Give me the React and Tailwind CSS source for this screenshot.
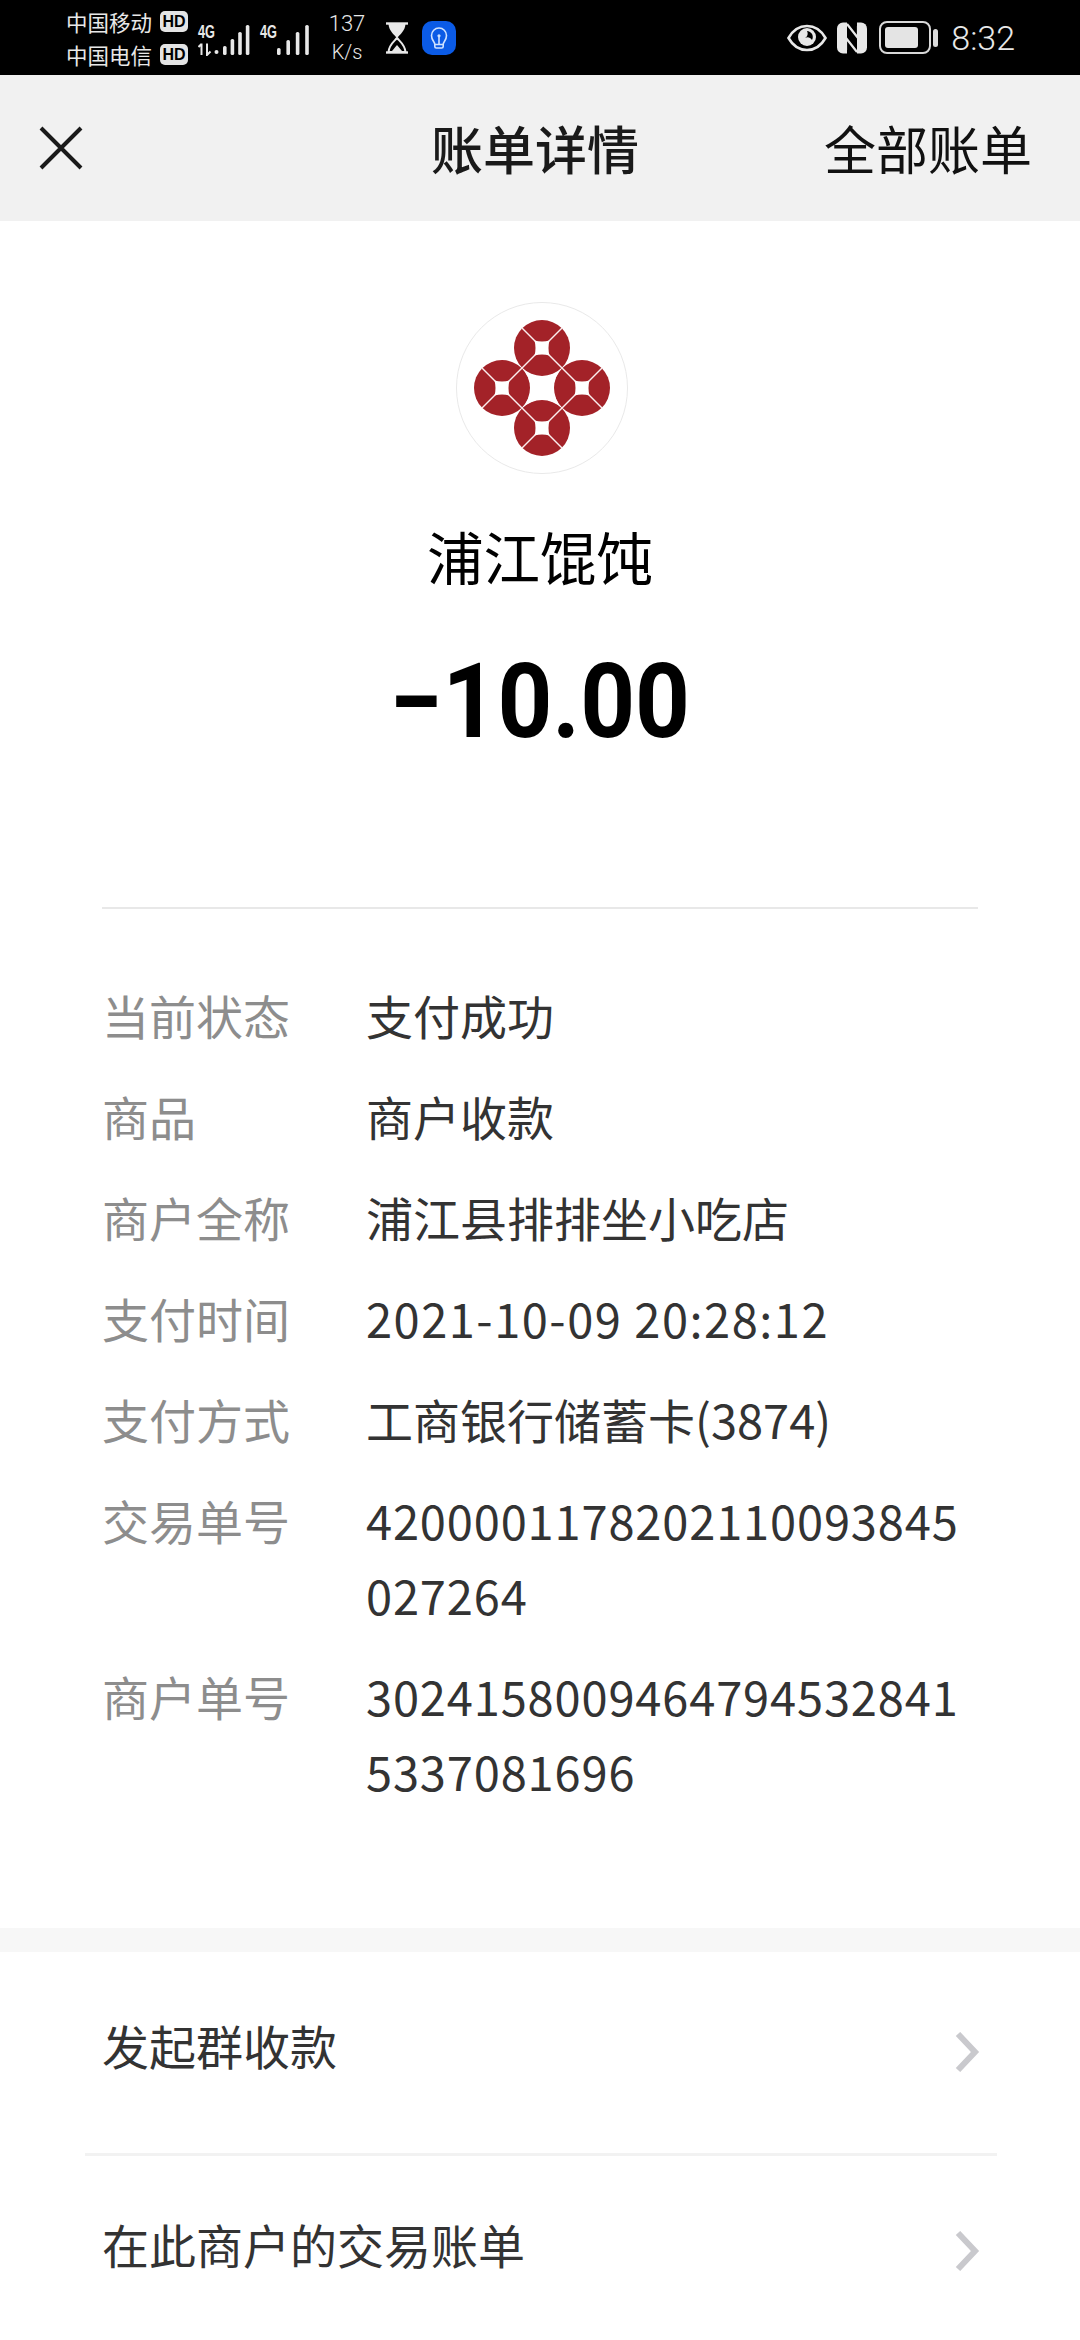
import React from "react";

const FONT = "font-['Noto_Sans_CJK_SC','Noto_Sans',sans-serif]";

function Signal({ heights, x0, pitch }) {
  return (
    <svg width="52" height="34" viewBox="0 0 52 34" className="block overflow-visible">
      <text x="0" y="15" fontSize="19" fontWeight="700" fill="#e8e8e8" fontFamily="Liberation Sans" textLength="17" lengthAdjust="spacingAndGlyphs">4G</text>
      {heights.map((h, i) => (
        <rect key={i} x={i * pitch + x0} y={32 - h} width="3.6" height={h} rx="1.6" fill="#e8e8e8" />
      ))}
    </svg>
  );
}

function Logo() {
  const coins = [[86, 46], [46, 86], [126, 86], [86, 126]];
  return (
    <svg width="172" height="172" viewBox="0 0 172 172" className="block ml-[3px]">
      <circle cx="86" cy="86" r="85.5" fill="#fff" stroke="#e9e9e9" strokeWidth="1" />
      {coins.map(([x, y]) => (
        <circle key={`${x}${y}`} cx={x} cy={y} r="28" fill="#a32228" />
      ))}
      {coins.map(([x, y]) => (
        <g key={`l${x}${y}`} stroke="#fbeeee" strokeWidth="1.4">
          <line x1={x - 20} y1={y - 20} x2={x + 20} y2={y + 20} />
          <line x1={x - 20} y1={y + 20} x2={x + 20} y2={y - 20} />
          <path
            d={`M${x - 7.5} ${y - 7.5}Q${x} ${y - 5.5} ${x + 7.5} ${y - 7.5}Q${x + 5.5} ${y} ${x + 7.5} ${y + 7.5}Q${x} ${y + 5.5} ${x - 7.5} ${y + 7.5}Q${x - 5.5} ${y} ${x - 7.5} ${y - 7.5}Z`}
            fill="#fff"
            stroke="none"
          />
        </g>
      ))}
      <path
        d="M66 66A28 28 0 0 0 106 66A28 28 0 0 0 106 106A28 28 0 0 0 66 106A28 28 0 0 0 66 66Z"
        fill="#fff"
      />
    </svg>
  );
}

function StatusBar() {
  return (
    <div className={`h-[75px] bg-black flex items-center text-[#e8e8e8] shrink-0 ${FONT}`}>
      <div className="ml-[66px] w-[122px] flex flex-col gap-[12px]">
        {["中国移动", "中国电信"].map((t) => (
          <div key={t} className="flex items-center h-[21px]">
            <span className="text-[21.5px] leading-[21px] w-[94px] whitespace-nowrap">{t}</span>
            <span className="w-[28px] h-[21px] rounded-[5px] bg-[#e4e4e4] text-black text-[16px] leading-[21px] font-bold text-center font-['Liberation_Sans',sans-serif]">HD</span>
          </div>
        ))}
      </div>
      <div className="ml-[10px] mt-[4px] relative">
        <Signal heights={[9, 16, 23, 30]} x0={25} pitch={7.6} />
        <svg width="24" height="13" viewBox="0 0 24 13" className="absolute left-0 top-[20px]">
          <path d="M3.5 0.5V12M0.5 4L3.5 1" stroke="#e8e8e8" strokeWidth="2" fill="none" />
          <path d="M9 0.5V12L12.5 8.5" stroke="#e8e8e8" strokeWidth="2" fill="none" />
          <circle cx="18.5" cy="9" r="2" fill="#e8e8e8" />
        </svg>
      </div>
      <div className="ml-[10px] mt-[4px]">
        <Signal heights={[7, 15, 23, 30]} x0={17} pitch={9.4} />
      </div>
      <div className="ml-[15px] w-[40px] flex flex-col items-center text-[22px] leading-[28px] font-['Roboto',sans-serif] font-light">
        <span>137</span>
        <span className="text-[20px]">K/s</span>
      </div>
      <svg width="24" height="32" viewBox="0 0 24 32" className="ml-[18px] block">
        <path d="M1 1.5H23" stroke="#e8e8e8" strokeWidth="2.4" />
        <path d="M1 30.5H23" stroke="#e8e8e8" strokeWidth="2.4" />
        <path d="M3.5 2H20.5C20 9 15 12.5 12 16C9 12.5 4 9 3.5 2Z" fill="#e8e8e8" />
        <path d="M12 16C15 19.5 20 23 20.5 30H3.5C4 23 9 19.5 12 16Z" fill="none" stroke="#e8e8e8" strokeWidth="2" />
        <path d="M12 23L17 29H7Z" fill="#e8e8e8" />
      </svg>
      <svg width="34" height="34" viewBox="0 0 34 34" className="ml-[13px] block">
        <rect width="34" height="34" rx="10" fill="#0b5be6" />
        <path d="M12.8 23.5C12.8 20.5 9.5 19.5 9.5 14.5A7.5 7.5 0 0 1 24.5 14.5C24.5 19.5 21.2 20.5 21.2 23.5V25.5A1.5 1.5 0 0 1 19.7 27H14.3A1.5 1.5 0 0 1 12.8 25.5Z" fill="none" stroke="#cfe2ff" strokeWidth="1.6" />
        <path d="M17 16V23.5M13 23.5H21" stroke="#cfe2ff" strokeWidth="1.6" fill="none" />
        <circle cx="17" cy="14.8" r="1.6" fill="#cfe2ff" />
      </svg>

      <svg width="40" height="28" viewBox="0 0 40 28" className="ml-auto block">
        <path d="M1.5 14C6 6 12.5 2 20 2S34 6 38.5 14C34 22 27.5 26 20 26S6 22 1.5 14Z" fill="none" stroke="#e8e8e8" strokeWidth="2.6" />
        <circle cx="20" cy="13" r="9" fill="#e8e8e8" />
        <path d="M20 7a6 6 0 0 1 5 9a5 5 0 0 0-7-2a5 5 0 0 0 2-7Z" fill="#000" />
      </svg>
      <svg width="30" height="32" viewBox="0 0 30 32" className="ml-[10px] block">
        <path d="M6 0.5H10V31.5H6A6 6 0 0 1 0 25.5V6.5A6 6 0 0 1 6 0.5Z" fill="#e8e8e8" />
        <path d="M20 0.5H24A6 6 0 0 1 30 6.5V25.5A6 6 0 0 1 24 31.5H20Z" fill="#e8e8e8" />
        <path d="M10 2L21 16V4M20 30L9 16V28" stroke="#e8e8e8" strokeWidth="2.2" fill="none" />
      </svg>
      <div className="ml-[12px] w-[52px] h-[33px] rounded-[8px] border-[2px] border-[#d8d8d8] p-[4px]">
        <div className="w-[33px] h-full rounded-[3px] bg-[#e4e4e4]" />
      </div>
      <div className="ml-[2px] w-[5px] h-[18px] rounded-full bg-[#dcdcdc]" />
      <span className="ml-[13px] mr-[65px] text-[34px] leading-none font-['Roboto',sans-serif] font-light">8:32</span>
    </div>
  );
}

function NavBar() {
  return (
    <div className={`h-[146px] bg-[#f1f1f1] flex items-center shrink-0 pl-[39px] pr-[48px] ${FONT}`}>
      <svg width="44" height="44" viewBox="0 0 44 44" className="block">
        <path d="M2 2L42 42M42 2L2 42" stroke="#1a1a1a" strokeWidth="4" fill="none" />
      </svg>
      <span className="ml-[348px] text-[52px] leading-none text-[#1a1a1a] font-medium whitespace-nowrap">账单详情</span>
      <span className="ml-auto text-[52px] leading-none text-[#111] whitespace-nowrap">全部账单</span>
    </div>
  );
}

function Row({ label, lines, lineClass = "" }) {
  return (
    <div className="flex mb-[26px]">
      <div className="w-[264px] text-[#8d8d8d] shrink-0">{label}</div>
      <div className="text-[#333]">
        {lines.map((l) => (
          <div key={l} className={`whitespace-nowrap ${lineClass}`}>{l}</div>
        ))}
      </div>
    </div>
  );
}

function Chevron() {
  return (
    <svg width="26" height="40" viewBox="0 0 26 40" className="block mt-[15px]">
      <path d="M3 2L20 20L3 38" stroke="#c9c9cd" strokeWidth="6" fill="none" />
    </svg>
  );
}

function LinkRow({ label, className }) {
  return (
    <div className={`flex items-center justify-between pl-[17px] pr-[16px] ${className}`}>
      <span className="text-[47px] leading-none text-[#333] whitespace-nowrap">{label}</span>
      <Chevron />
    </div>
  );
}

export default function App() {
  return (
    <div className={`w-[1080px] h-[2340px] bg-white flex flex-col overflow-hidden ${FONT}`}>
      <StatusBar />
      <NavBar />
      <div className="flex flex-col items-center pt-[81px]">
        <Logo />
        <div className="mt-[39px] text-[56.5px] leading-[84px] text-black whitespace-nowrap">浦江馄饨</div>
        <div className="mt-[45px] text-[103px] leading-[120px] font-bold text-black whitespace-nowrap font-['Roboto','Noto_Sans',sans-serif] scale-x-[0.93]">−10.00</div>
      </div>
      <div className="mx-[102px] mt-[145px] h-[2px] bg-[#e8e8e8] shrink-0" />
      <div className="px-[102px] pt-[68px] text-[47px] leading-[75px]">
        <Row label="当前状态" lines={["支付成功"]} />
        <Row label="商品" lines={["商户收款"]} />
        <Row label="商户全称" lines={["浦江县排排坐小吃店"]} />
        <Row label="支付时间" lines={["2021-10-09 20:28:12"]} lineClass="tracking-[1.5px]" />
        <Row label="支付方式" lines={["工商银行储蓄卡(3874)"]} />
        <Row label="交易单号" lines={["420000117820211009384" + "5", "027264"]} lineClass="tracking-[0.85px]" />
        <Row label="商户单号" lines={["302415800946479453284" + "1", "5337081696"]} lineClass="tracking-[0.85px]" />
      </div>
      <div className="mt-auto flex flex-col">
        <div className="h-[24px] bg-[#f7f7f7]" />
        <div className="ml-[85px] mr-[83px]">
          <LinkRow label="发起群收款" className="h-[204px] pb-[16px] border-b-[3px] border-[#f2f2f2]" />
          <LinkRow label="在此商户的交易账单" className="h-[184px] pb-[10px]" />
        </div>
      </div>
    </div>
  );
}
